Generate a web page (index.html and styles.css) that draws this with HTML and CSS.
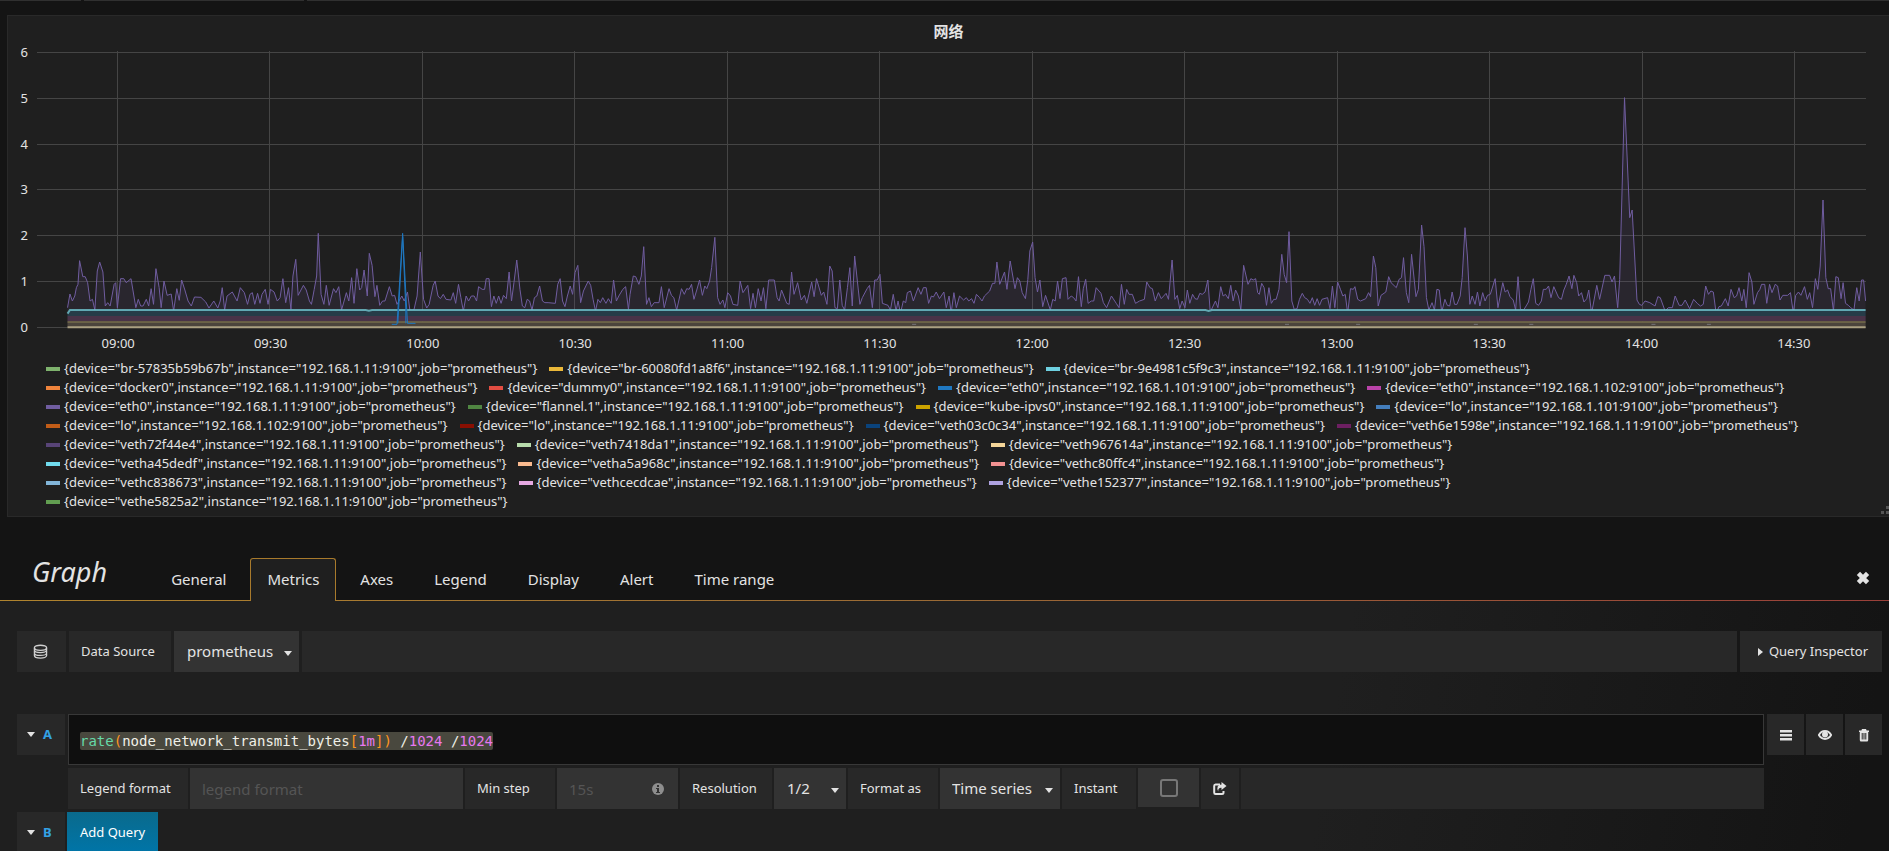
FILE: index.html
```html
<!DOCTYPE html>
<html lang="zh-CN">
<head>
<meta charset="utf-8">
<meta name="viewport" content="width=device-width, initial-scale=1">
<title>网络</title>
<link rel="stylesheet" href="styles.css">
</head>
<body>
<div class="toolbar-edge"><span class="edge-a"></span><span class="edge-b"></span><span class="edge-c"></span></div>

<section class="panel">
  <h1 class="panel-title">网络</h1>
  <div class="chart">
    <div class="y-axis"><span>6</span><span>5</span><span>4</span><span>3</span><span>2</span><span>1</span><span>0</span></div>
    <svg class="plot" viewBox="92 155 4552 834" preserveAspectRatio="none" role="img" aria-label="网络">
      <g class="grid">
        <path d="M92 160H4644M92 296H4644M92 434H4644M92 570H4644M92 708H4644M92 847H4644M92 983H4644"/>
        <path d="M292 155V983M671 155V983M1051 155V983M1429 155V983M1810 155V983M2188 155V983M2569 155V983M2947 155V983M3328 155V983M3706 155V983M4088 155V983M4465 155V983"/>
      </g>
      <g id="eth0"></g>
      <path class="band-blue" d="M168 943L174 932H4643V950H168Z"/>
      <path class="band-purple" d="M168 950H4643V966H168Z"/>
      <path class="band-brown" d="M168 966H4643V986H168Z"/>
      <path class="line-cyan" d="M168 943L174 932H910L918 934L926 932H3000L3008 935L3016 932H4643"/>
      <path class="line-yellow" d="M168 968H4643"/>
      <path class="line-cream" d="M168 984H4643"/>
      <path class="line-blue" d="M975 975H988L1002 702L1014 972H1034M990 972L1002 712L1010 930V972"/>
      <path class="dots" d="M2270 975h10M3198 975h10M3375 975h10M3668 975h10M3806 975h10M4110 975h10M4248 975h10"/>
    </svg>
  </div>
  <div class="x-axis"><span>09:00</span><span>09:30</span><span>10:00</span><span>10:30</span><span>11:00</span><span>11:30</span><span>12:00</span><span>12:30</span><span>13:00</span><span>13:30</span><span>14:00</span><span>14:30</span></div>
  <div class="legend" id="legend"></div>
  <svg class="resize" viewBox="0 0 8 8"><path d="M5 0h3v3H5zM0 5h3v3H0zM5 5h3v3H5z"/></svg>
</section>

<nav class="tabs">
  <h2 class="tabs-title">Graph</h2>
  <button class="tab">General</button>
  <button class="tab active">Metrics</button>
  <button class="tab">Axes</button>
  <button class="tab">Legend</button>
  <button class="tab">Display</button>
  <button class="tab">Alert</button>
  <button class="tab">Time range</button>
  <button class="close" aria-label="Close"><svg viewBox="0 0 14 14"><path d="M3 3l8 8M11 3l-8 8"/></svg></button>
</nav>

<main class="editor">
  <div class="row source-row">
    <span class="cell icon-cell"><svg class="db" viewBox="0 0 16 16"><ellipse cx="8" cy="4" rx="6.500" ry="2.700"/><path d="M1.500 4v2.500c0 1.500 2.900 2.700 6.500 2.700s6.500-1.200 6.500-2.700V4M1.500 7v2.500c0 1.500 2.900 2.700 6.500 2.700s6.500-1.200 6.500-2.700V7M1.500 10v2.300C1.500 13.800 4.400 15 8 15s6.500-1.200 6.500-2.700V10"/></svg></span>
    <label class="cell source-label" for="source">Data Source</label>
    <span class="select source-select"><select id="source"><option>prometheus</option></select></span>
    <span class="cell fill"></span>
    <button class="cell inspector"><i class="caret-right"></i>Query Inspector</button>
  </div>

  <div class="row query-row">
    <button class="cell ref"><i class="caret-down"></i>A</button>
    <div class="query">
      <div class="code" contenteditable="true" role="textbox" aria-label="Query A" spellcheck="false"><span class="selected"><span class="fn">rate</span><span class="br">(</span>node_network_transmit_bytes<span class="br">[</span><span class="num">1m</span><span class="br">])</span> /<span class="num">1024</span> /<span class="num">1024</span></span></div>
      <div class="row options">
        <label class="cell w-legend" for="fmt">Legend format</label>
        <input class="field w-format" id="fmt" type="text" placeholder="legend format">
        <label class="cell w-step" for="step">Min step</label>
        <span class="step"><input class="field" id="step" type="text" placeholder="15s"><svg class="info" viewBox="0 0 12 12"><circle cx="6" cy="6" r="6"/><path d="M5 2h2v2H5zM4 5h3v4h1v1H4V9h1V6H4z"/></svg></span>
        <label class="cell w-res" for="res">Resolution</label>
        <span class="select w-ressel"><select id="res"><option>1/2</option></select></span>
        <label class="cell w-as" for="as">Format as</label>
        <span class="select w-assel"><select id="as"><option>Time series</option></select></span>
        <label class="cell w-instant" for="instant">Instant</label>
        <span class="check"><input id="instant" type="checkbox"></span>
        <button class="cell share" aria-label="Share"><svg viewBox="0 0 14 14"><path class="box" d="M7 2.500H2.500Q1.200 2.500 1.200 4v6.500Q1.200 12 2.500 12H9q1.500 0 1.500-1.500V9"/><path class="arrow" d="M8.500 0L13.500 4 8.500 8V5.800Q5 5.500 5.200 9.500 2.500 3 8.500 2.600z"/></svg></button>
        <span class="cell fill"></span>
      </div>
    </div>
    <div class="actions">
      <button class="cell act-menu" aria-label="Menu"><svg viewBox="0 0 14 14"><path d="M1 2h12v2.400H1zM1 6h12v2.400H1zM1 10h12v2.400H1z"/></svg></button>
      <button class="cell act-eye" aria-label="Toggle"><svg viewBox="0 0 14 14"><path class="outline" d="M.8 7C4 1.800 10 1.800 13.200 7 10 12.200 4 12.200.8 7z"/><circle cx="7" cy="6.500" r="3"/></svg></button>
      <button class="cell act-trash" aria-label="Delete"><svg viewBox="0 0 14 14"><path fill-rule="evenodd" d="M5 1h4l.6 1.500H12V4h-.8v8q0 1.500-1.200 1.500H4Q2.800 13.500 2.800 12V4H2V2.500h2.400zM4.700 5v6.500h1V5zM6.500 5v6.500h1V5zM8.300 5v6.500h1V5z"/></svg></button>
    </div>
  </div>

  <div class="row add-row">
    <button class="cell ref"><i class="caret-down"></i>B</button>
    <button class="add">Add Query</button>
  </div>
</main>
<script src="chart.js"></script>
</body>
</html>
```
FILE: chart.js
```js
const legend = [
  ['#7eb26d', 'br-57835b59b67b', '11'], ['#eab839', 'br-60080fd1a8f6', '11'], ['#6ed0e0', 'br-9e4981c5f9c3', '11'],
  ['#ef843c', 'docker0', '11'], ['#e24d42', 'dummy0', '11'], ['#1f78c1', 'eth0', '101'], ['#ba43a9', 'eth0', '102'],
  ['#705da0', 'eth0', '11'], ['#508642', 'flannel.1', '11'], ['#cca300', 'kube-ipvs0', '11'], ['#447ebc', 'lo', '101'],
  ['#c15c17', 'lo', '102'], ['#890f02', 'lo', '11'], ['#0a437c', 'veth03c0c34', '11'], ['#6d1f62', 'veth6e1598e', '11'],
  ['#584477', 'veth72f44e4', '11'], ['#b7dbab', 'veth7418da1', '11'], ['#f4d598', 'veth967614a', '11'],
  ['#70dbed', 'vetha45dedf', '11'], ['#f9ba8f', 'vetha5a968c', '11'], ['#f29191', 'vethc80ffc4', '11'],
  ['#82b5d8', 'vethc838673', '11'], ['#e5a8e2', 'vethcecdcae', '11'], ['#aea2e0', 'vethe152377', '11'],
  ['#629e51', 'vethe5825a2', '11']
];
const box = document.getElementById('legend');
for (const [color, device, host] of legend) {
  const item = document.createElement('button');
  item.className = 'legend-item';
  const swatch = document.createElement('i');
  swatch.className = 'swatch';
  swatch.style.background = color;
  item.append(swatch, `{device="${device}",instance="192.168.1.${host}:9100",job="prometheus"}`);
  box.append(item);
}

// Samples of the eth0 series, one block per third of the time range.
const blocks = [
  [0, '168,925 174,884 180,905 186,890 190,865 194,855 198,784 206,832 212,832 218,850 224,905 230,900 236,932 242,815 248,788 256,818 262,920 268,910 274,920 284,855 288,850 292,925 300,838 308,838 314,850 326,838 338,925 344,900 350,920 356,920 364,900 370,920 376,868 382,915 388,808 396,865 401,925 408,845 416,888 426,884 432,935 440,868 446,903 452,842 460,872 468,905 476,920 484,893 500,894 512,908 520,926 532,905 542,926 548,905 553,865 559,932 565,890 578,878 590,905 598,865 608,880 616,915 622,885 628,880 634,915 641,882 647,912 652,885 660,870 667,915 673,870 682,878 690,905 697,895 704,838 711,910 718,865 724,930 729,830 736,780 742,888 755,858 762,872 770,905 775,915 782,870 788,830 792,702 799,885 806,915 812,858 819,918 830,868 836,880 843,862 850,932 862,880 868,905 875,835 881,912 888,808 895,872 900,865 906,812 914,890 919,762 926,798 933,892 938,858 945,918 952,905 958,905 969,862 976,890 982,888 988,915 1000,890 1006,905 1014,878 1020,932 1030,932 1038,890 1046,758 1054,900 1062,926 1068,915 1078,858 1083,845 1090,890 1096,898 1103,885 1110,900 1122,902 1128,880 1134,912 1141,855 1147,895 1153,935 1160,890 1166,905 1173,890 1180,890 1186,905 1191,862 1200,870 1206,870 1210,838 1217,838 1223,922 1229,890 1235,912 1241,890 1247,912 1253,888 1260,898 1267,818 1273,905 1279,850 1286,782 1294,870 1300,920 1306,925 1312,900 1318,905 1324,932 1330,895 1336,890 1343,860 1350,905 1356,910 1364,910 1382,912 1388,855 1394,838 1400,905 1406,922 1412,890 1419,860 1425,885 1431,820 1438,798 1445,910 1452,875 1464,845 1470,858 1476,900 1482,935 1488,900 1494,910 1500,895 1508,912 1514,898 1521,912 1527,842 1534,905 1540,890 1550,870 1557,862 1564,930'],
  [1568, '0,885 8,830 14,832 22,855 28,830 34,742 41,915 47,895 53,922 60,910 72,910 78,862 85,925 97,868 103,888 109,895 116,932 128,868 135,885 141,868 147,870 153,855 159,900 166,872 173,842 180,888 186,860 191,868 198,845 203,805 211,714 218,895 224,915 231,902 236,925 243,880 250,890 256,915 268,918 274,845 281,880 293,858 300,928 306,882 312,925 319,868 326,905 332,865 338,928 345,842 359,842 366,895 371,905 377,872 390,912 396,915 402,818 408,885 417,850 426,902 434,888 440,912 452,848 458,892 464,838 476,888 482,878 490,915 497,800 503,815 510,925 516,928 522,842 528,918 534,932 541,865 547,805 553,920 559,770 572,915 578,895 590,868 596,858 603,925 609,842 615,842 622,825 628,912 642,918 648,932 655,885 662,935 667,905 673,942 680,905 686,910 690,880 698,875 705,905 717,865 724,885 730,865 737,865 743,912 750,890 755,893 762,878 770,898 781,878 787,925 794,890 799,942 806,880 812,925 820,890 830,902 837,895 843,905 850,898 856,912 862,885 870,895 876,905 882,890 895,875 902,852 908,852 913,788 920,855 932,818 938,870 946,785 958,868 964,835 970,845 976,880 984,898 990,840 995,755 1002,728 1008,835 1014,878 1020,842 1027,922 1034,888 1046,932 1052,900 1058,905 1064,845 1070,898 1076,838 1085,835 1090,900 1098,890 1104,895 1110,905 1116,832 1123,922 1128,868 1134,840 1140,912 1148,905 1154,905 1160,865 1172,882 1178,910 1186,925 1198,890 1210,912 1217,925 1223,855 1230,915 1236,870 1242,885 1250,885 1258,912 1268,905 1280,900 1286,848 1294,865 1300,868 1307,905 1315,880 1322,898 1334,882 1340,900 1349,782 1356,900 1362,888 1368,928 1374,905 1381,925 1387,872 1393,912 1400,885 1406,898 1412,900 1418,882 1424,885 1431,878 1438,842 1444,938 1457,905 1463,925 1470,862 1476,890 1482,885 1489,898 1495,858 1501,905 1507,872 1514,890 1520,932 1527,798 1538,855 1545,838 1551,842 1557,838 1562,880'],
  [3134, '0,885 6,852 12,865 18,918 24,865 30,912 36,900 42,900 49,870 56,765 62,825 68,850 74,697 81,905 87,930 94,928 100,900 107,882 113,895 120,900 126,912 132,895 138,918 144,898 150,918 156,900 170,895 176,928 182,860 188,925 195,848 202,870 208,890 214,885 220,942 227,868 234,870 238,862 245,900 252,905 265,898 272,880 277,892 284,770 290,805 296,920 303,888 315,878 322,832 328,850 341,865 348,840 354,835 359,775 366,880 372,910 379,765 390,892 396,870 404,677 410,742 416,895 422,932 430,910 436,932 442,870 448,872 454,938 462,900 468,918 474,920 480,878 486,915 492,915 500,890 505,835 512,685 518,770 524,915 530,890 537,915 543,878 549,920 556,880 562,905 568,888 575,885 587,838 594,925 606,850 612,878 618,872 624,892 632,902 638,932 644,832 650,930 658,932 670,908 676,870 682,838 688,912 695,918 702,905 707,870 714,870 720,860 726,895 733,862 745,895 752,900 758,872 764,855 771,830 778,868 783,828 790,850 795,890 802,880 808,908 815,898 820,872 827,942 840,858 847,900 860,828 872,828 878,848 884,830 892,925 897,840 909,295 922,655 928,632 940,902 946,915 952,918 960,905 972,910 985,920 992,892 998,895 1010,935 1018,925 1028,925 1035,890 1045,918 1052,918 1060,902 1071,928 1081,900 1090,912 1098,920 1105,915 1111,860 1118,885 1124,875 1130,878 1137,942 1144,922 1150,920 1160,898 1167,920 1174,870 1182,895 1188,890 1194,865 1201,905 1206,870 1212,925 1219,820 1226,848 1231,915 1240,880 1246,870 1250,855 1258,855 1263,912 1270,855 1276,880 1284,855 1290,860 1296,902 1303,888 1315,888 1322,880 1329,940 1335,888 1342,878 1348,888 1357,862 1364,900 1370,880 1377,925 1384,838 1390,870 1396,800 1403,602 1410,835 1416,868 1422,868 1429,935 1435,832 1441,835 1448,898 1453,850 1459,912 1466,918 1472,925 1480,932 1487,865 1493,905 1499,842 1504,842 1509,905']
];
const points = blocks.flatMap(([offset, text]) => text.split(' ').map(p => {
  const [x, y] = p.split(',').map(Number);
  return `${x + offset},${y}`;
})).join(' ');
const NS = 'http://www.w3.org/2000/svg';
const group = document.getElementById('eth0');
for (const [tag, cls, pts] of [['polygon', 'area-eth', `168,984 ${points} 4643,984`], ['polyline', 'line-eth', points]]) {
  const el = document.createElementNS(NS, tag);
  el.setAttribute('class', cls);
  el.setAttribute('points', pts);
  group.append(el);
}
```
FILE: styles.css
```css
* { box-sizing: border-box; }
body {
  display: flex;
  flex-direction: column;
  margin: 0;
  height: 100vh;
  overflow: hidden;
  background: #141414;
  color: #e3e3e3;
  font: 13px/19px "Noto Sans", "Noto Sans CJK SC", sans-serif;
}
button, input, select { font: inherit; color: inherit; border: 0; border-radius: 0; background: none; padding: 0; margin: 0; }
svg { display: block; }

.toolbar-edge { display: flex; gap: 3px; height: 15px; }
.toolbar-edge span { height: 1px; background: #303030; }
.edge-a { width: 81px; }
.edge-b { width: 220px; }
.edge-c { flex: 1; }

.panel {
  position: relative;
  margin-left: 7px;
  padding-bottom: 5px;
  background: #1f1f1f;
  border: 1px solid #292929;
  border-right: 0;
}
.panel-title { margin: 0; padding: 5px 0; font-size: 15px; line-height: 20px; font-weight: 700; text-align: center; }
.chart { display: flex; gap: 9px; margin: 5px 23px 0 0; height: 278px; }
.y-axis { display: flex; flex-direction: column; justify-content: space-between; width: 20px; margin: -8px 0 -8px; text-align: right; }
.plot { flex: 1; min-width: 0; height: 278px; }
.plot path, .plot polyline, .plot polygon { vector-effect: non-scaling-stroke; fill: none; }
.grid path { stroke: #454545; shape-rendering: crispEdges; }
.plot .area-eth { fill: #705da0; fill-opacity: .12; }
.line-eth { stroke: #705da0; }
.plot .band-blue { fill: #263c48; }
.plot .band-purple { fill: #493348; }
.plot .band-brown { fill: #4b443c; }
.line-cyan { stroke: #70c5cf; stroke-width: 2; stroke-opacity: .8; }
.line-yellow { stroke: #8a8052; }
.line-cream { stroke: #aaa082; stroke-width: 2; }
.line-blue { stroke: #1f78c1; }
.dots { stroke: #76747a; }
.x-axis { display: grid; grid-template-columns: repeat(12, 1fr); margin: 5px 19px 0 34px; text-align: center; }

.legend { display: flex; flex-wrap: wrap; column-gap: 12px; padding: 6px 20px 0 38px; }
.legend-item { display: flex; align-items: center; gap: 4px; height: 19px; white-space: nowrap; }
.swatch { width: 14px; height: 4px; }
.resize { position: absolute; right: 0; bottom: 2px; width: 8px; height: 8px; fill: #555; }

.tabs {
  display: flex;
  flex: none;
  align-items: flex-end;
  margin-top: 41px;
  height: 43px;
  padding-bottom: 1px;
  background: linear-gradient(90deg, #b0842e, #9a6a35 50%, #9a403a) bottom / 100% 1px no-repeat;
}
.tabs-title { margin: 0 47px 11px 32px; font-size: 27px; line-height: 34px; font-style: italic; font-weight: 400; }
.tab { height: 42px; margin-right: 7px; padding: 0 16px 1px; border: 1px solid transparent; border-bottom: 0; font-size: 15px; }
.tab.active { height: 43px; margin-bottom: -1px; border-color: #a87a2c; border-radius: 3px 3px 0 0; background: #1f1f1f; }
.close { margin: 0 18px 14px auto; }
.close svg { width: 16px; height: 16px; fill: none; stroke: #e3e3e3; stroke-width: 4; }

.editor { flex: 1; min-height: 0; overflow: hidden; padding: 30px 7px 0 17px; background: linear-gradient(100deg, #1f1f1f 70%, #141414 98%); }
.row { display: flex; gap: 3px; }
.cell { display: flex; align-items: center; height: 41px; padding: 0 12px; background: #282828; white-space: nowrap; }
.fill { flex: 1; }
.icon-cell { width: 49px; padding: 0 16px; }
.db { width: 15px; height: 15px; fill: none; stroke: #d0d0d0; stroke-width: 1.4; }
.source-label { width: 102px; }
.select { position: relative; height: 41px; background: #333; }
.select::after {
  content: "";
  position: absolute;
  right: 7px;
  top: 20px;
  border: 4px solid transparent;
  border-top: 5px solid #e3e3e3;
  border-bottom: 0;
  pointer-events: none;
}
.select select { width: 100%; height: 100%; padding: 0 13px; appearance: none; font-size: 15px; }
.source-select { width: 125px; }
.inspector { gap: 6px; padding: 0 14px 0 18px; }
.caret-right { border: 4px solid transparent; border-left: 5px solid #e3e3e3; border-right: 0; }
.caret-down { border: 4px solid transparent; border-top: 5px solid #e3e3e3; border-bottom: 0; }

.query-row { margin-top: 42px; align-items: flex-start; }
.ref { width: 48px; gap: 8px; padding: 0 0 0 10px; color: #33a2e5; font-weight: 700; }
.query { flex: 1; min-width: 0; }
.code {
  height: 51px;
  padding: 17px 11px;
  background: #0f0f0f;
  border: 1px solid #383838;
  color: #f0f0e8;
  font: 14px/18px "DejaVu Sans Mono", monospace;
}
.selected { background: #49483e; border-radius: 2px; padding: 1px 0; }
.fn { color: #66d9a8; }
.br { color: #fd971f; }
.num { color: #e878f0; }
.options { margin-top: 3px; gap: 2px; }
.w-legend { width: 120px; }
.field { height: 41px; padding: 0 12px; background: #333; font-size: 15px; }
.field::placeholder { color: #555; }
.w-format { width: 273px; }
.w-step { width: 90px; }
.step { position: relative; width: 121px; }
.step .field { width: 100%; }
.info { position: absolute; right: 14px; top: 15px; width: 12px; height: 12px; fill: #8e8e8e; }
.info path { fill: #333; }
.w-res { width: 92px; }
.w-ressel { width: 72px; }
.w-as { width: 90px; }
.w-assel { width: 120px; }
.w-assel select { padding: 0 12px; }
.w-instant { width: 74px; }
.check { display: flex; align-items: center; justify-content: center; width: 61px; height: 39px; background: #333; }
.check input { appearance: none; width: 18px; height: 18px; border: 2px solid #777; border-radius: 3px; }
.share { width: 38px; }
.share svg { width: 14px; height: 14px; }
.share .box { fill: none; stroke: #e3e3e3; stroke-width: 2; }
.share .arrow { fill: #e3e3e3; }
.actions { display: flex; gap: 2px; }
.actions .cell { width: 37px; justify-content: center; padding: 0; }
.actions svg { width: 14px; height: 14px; fill: #e3e3e3; }
.actions .outline { fill: none; stroke: #e3e3e3; stroke-width: 2; }

.add-row { margin-top: 3px; gap: 2px; }
.add { height: 41px; padding: 0 13px; background: linear-gradient(#0a6a8c, #0075a8); color: #fff; }
```
